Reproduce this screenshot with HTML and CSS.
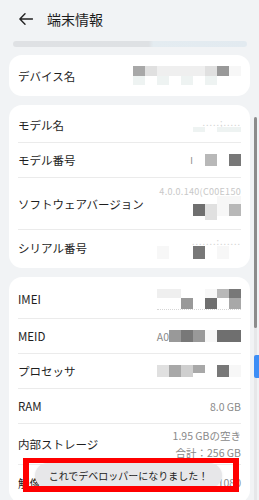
FILE: index.html
```html
<!DOCTYPE html>
<html lang="ja">
<head>
  <meta charset="UTF-8">
  <meta name="viewport" content="width=device-width, initial-scale=1.0">
  <title>端末情報</title>
  <link rel="stylesheet" href="styles.css">
</head>
<body>
  <div class="header">
    <svg class="back" width="14" height="12" viewBox="0 0 14 12">
      <path d="M13.5 6H1M6 0.8L0.9 6L6 11.2" fill="none" stroke="#222" stroke-width="1.4" stroke-linecap="round" stroke-linejoin="round"/>
    </svg>
    <div class="title">端末情報</div>
  </div>
  <div class="fade-bar"></div>

  <div class="card">
    <div class="row">
      <div class="label">デバイス名</div>
      <div class="mosaic">
        <div class="mrow h10"><span class="g5"></span><span class="g2"></span><span class="g1"></span><span class="g1"></span><span class="g1"></span><span class="g1"></span><span class="g2"></span><span class="g6"></span><span class="g0"></span></div>
        <div class="mrow h9"><span class="t1"></span><span></span><span class="t1"></span><span></span><span class="t1"></span><span></span><span class="t1"></span><span></span><span></span></div>
      </div>
    </div>
  </div>

  <div class="card">
    <div class="row">
      <div class="label">モデル名</div>
      <div class="mosaic">
        <div class="faint">.....;.....</div>
        <div class="mrow h5"><span class="t1"></span><span></span><span class="t1"></span><span class="t1"></span></div>
      </div>
    </div>
    <div class="row">
      <div class="label">モデル番号</div>
      <div class="mosaic inline">
        <span class="glyph">I</span>
        <div class="mrow h12"><span></span><span class="g4"></span><span></span><span class="g8"></span></div>
      </div>
    </div>
    <div class="row tall">
      <div class="label">ソフトウェアバージョン</div>
      <div class="mosaic">
        <div class="faint ver">4.0.0.140(C00E150</div>
        <div class="mrow h8"><span class="g0"></span><span class="g0"></span></div>
        <div class="mrow h12"><span class="g9"></span><span class="g2"></span><span class="g0"></span><span class="g4"></span></div>
        <div class="mrow h4"><span></span><span class="g2"></span><span></span><span></span></div>
      </div>
    </div>
    <div class="row">
      <div class="label">シリアル番号</div>
      <div class="mosaic">
        <div class="faint">.......:......</div>
        <div class="mrow h13"><span class="g0"></span><span></span><span></span><span class="g8"></span><span></span><span class="g0"></span><span></span></div>
      </div>
    </div>
  </div>

  <div class="card">
    <div class="row imei">
      <div class="label">IMEI</div>
      <div class="mosaic dotted">
        <div class="mrow h9"><span class="g1"></span><span class="g1"></span><span></span><span></span><span class="g0"></span><span class="g4"></span><span class="g8"></span></div>
        <div class="mrow h11"><span></span><span></span><span class="g6"></span><span></span><span class="g9"></span><span></span><span class="g5"></span></div>
      </div>
    </div>
    <div class="row">
      <div class="label">MEID</div>
      <div class="mosaic inline">
        <span class="value">A0</span>
        <div class="mrow h12"><span class="g6"></span><span class="g8"></span><span class="g6"></span><span class="g0"></span><span class="g9"></span><span class="g9"></span></div>
      </div>
    </div>
    <div class="row">
      <div class="label">プロセッサ</div>
      <div class="mosaic">
        <div class="mrow h12"><span class="g2"></span><span class="g5"></span><span class="g3"></span><span class="g5 short"></span><span></span><span class="g8"></span><span class="g0"></span></div>
      </div>
    </div>
    <div class="row">
      <div class="label">RAM</div>
      <div class="value">8.0 GB</div>
    </div>
    <div class="row storage">
      <div class="label">内部ストレージ</div>
      <div class="value stack">
        <div>1.95 GBの空き</div>
        <div>合計：256 GB</div>
      </div>
    </div>
    <div class="row">
      <div class="label">解像度</div>
      <div class="value">1080</div>
    </div>
  </div>

  <div class="scroll-track"></div>
  <div class="scroll-thumb"></div>
  <div class="side-tab"></div>

  <div class="toast">これでデベロッパーになりました！</div>
  <div class="mark"></div>
</body>
</html>
```

FILE: styles.css
```css
html, body {
  height: 500px;
  overflow: hidden;
}

body {
  margin: 0;
  background: #f1f3f5;
  font-family: "Noto Sans CJK JP", "Noto Sans", sans-serif;
  color: #1e1e1e;
  position: relative;
}

.header {
  height: 35px;
  display: flex;
  align-items: center;
  padding-left: 19px;
  gap: 14px;
  padding-top: 2px;
  box-sizing: border-box;
}

.title {
  font-size: 14px;
  line-height: 1;
}

.fade-bar {
  margin: 6px 12px 0 13px;
  height: 6px;
  border-radius: 3px;
  background: linear-gradient(90deg, #dfe1e4 0%, #dee1e4 58%, #e4ecf1 60%, #e2eaf0 100%);
  filter: blur(0.6px);
}

.card {
  background: #fff;
  margin: 8px 9px 0;
  padding: 3px 9px;
  border-radius: 13px;
}

.card + .card {
  margin-top: 9px;
}

.row {
  height: 35px;
  box-sizing: border-box;
  border-bottom: 1px solid #ebebeb;
  display: flex;
  align-items: center;
  justify-content: space-between;
}

.row:last-child {
  border-bottom: none;
}

.row.tall {
  height: 52px;
}

.row.imei {
  height: 39px;
}

.row.storage {
  height: 41px;
}

.label {
  font-size: 11.5px;
  white-space: nowrap;
}

.value {
  font-size: 10.5px;
  color: #8a8a8a;
  text-align: right;
  white-space: nowrap;
}

.stack {
  line-height: 17px;
}

.mosaic {
  display: flex;
  flex-direction: column;
  align-items: flex-end;
}

.mosaic.inline {
  flex-direction: row;
  align-items: center;
}

.mosaic.dotted .mrow:last-child {
  border-bottom: 1px dotted #d6d6d6;
}

.mrow {
  display: flex;
  align-items: flex-start;
}

.mrow span {
  width: 12px;
  height: 100%;
}

.h4 { height: 4px; }
.h5 { height: 5px; }
.h8 { height: 8px; }
.h9 { height: 9px; }
.h10 { height: 10px; }
.h11 { height: 11px; }
.h12 { height: 12px; }
.h13 { height: 13px; }

.mrow span.short { height: 8px; }

.g0 { background: #f7f7f7; }
.g1 { background: #efefef; }
.g2 { background: #e0e0e0; }
.g3 { background: #cfcfcf; }
.g4 { background: #b8b8b8; }
.g5 { background: #a8a8a8; }
.g6 { background: #999; }
.g8 { background: #787878; }
.g9 { background: #6f6f6f; }
.t1 { background: #eef3f2; }

.faint {
  font-size: 9px;
  line-height: 9px;
  color: #d4d4d4;
  letter-spacing: 1px;
}

.faint.ver {
  letter-spacing: 0.3px;
  color: #c8c8c8;
}

.glyph {
  font-size: 9px;
  color: #888;
}

.scroll-track {
  position: absolute;
  left: 254px;
  top: 117px;
  width: 3px;
  height: 383px;
  background: #e6e7e9;
}

.scroll-thumb {
  position: absolute;
  left: 254px;
  top: 117px;
  width: 3px;
  height: 211px;
  border-radius: 2px;
  background: #8c8c8c;
}

.side-tab {
  position: absolute;
  left: 254px;
  top: 355px;
  width: 5px;
  height: 23px;
  border-radius: 2px 0 0 2px;
  background: #3d8ef6;
}

.toast {
  position: absolute;
  left: 35px;
  top: 463px;
  width: 187px;
  height: 25px;
  border-radius: 13px;
  background: #e7e7e9;
  box-shadow: 0 1px 3px rgba(0, 0, 0, 0.08);
  font-size: 10px;
  line-height: 25px;
  text-align: center;
  color: #222;
}

.mark {
  position: absolute;
  left: 23px;
  top: 458px;
  width: 216px;
  height: 34px;
  box-sizing: border-box;
  border: 6px solid #ff0000;
  border-top-width: 5px;
}
```
